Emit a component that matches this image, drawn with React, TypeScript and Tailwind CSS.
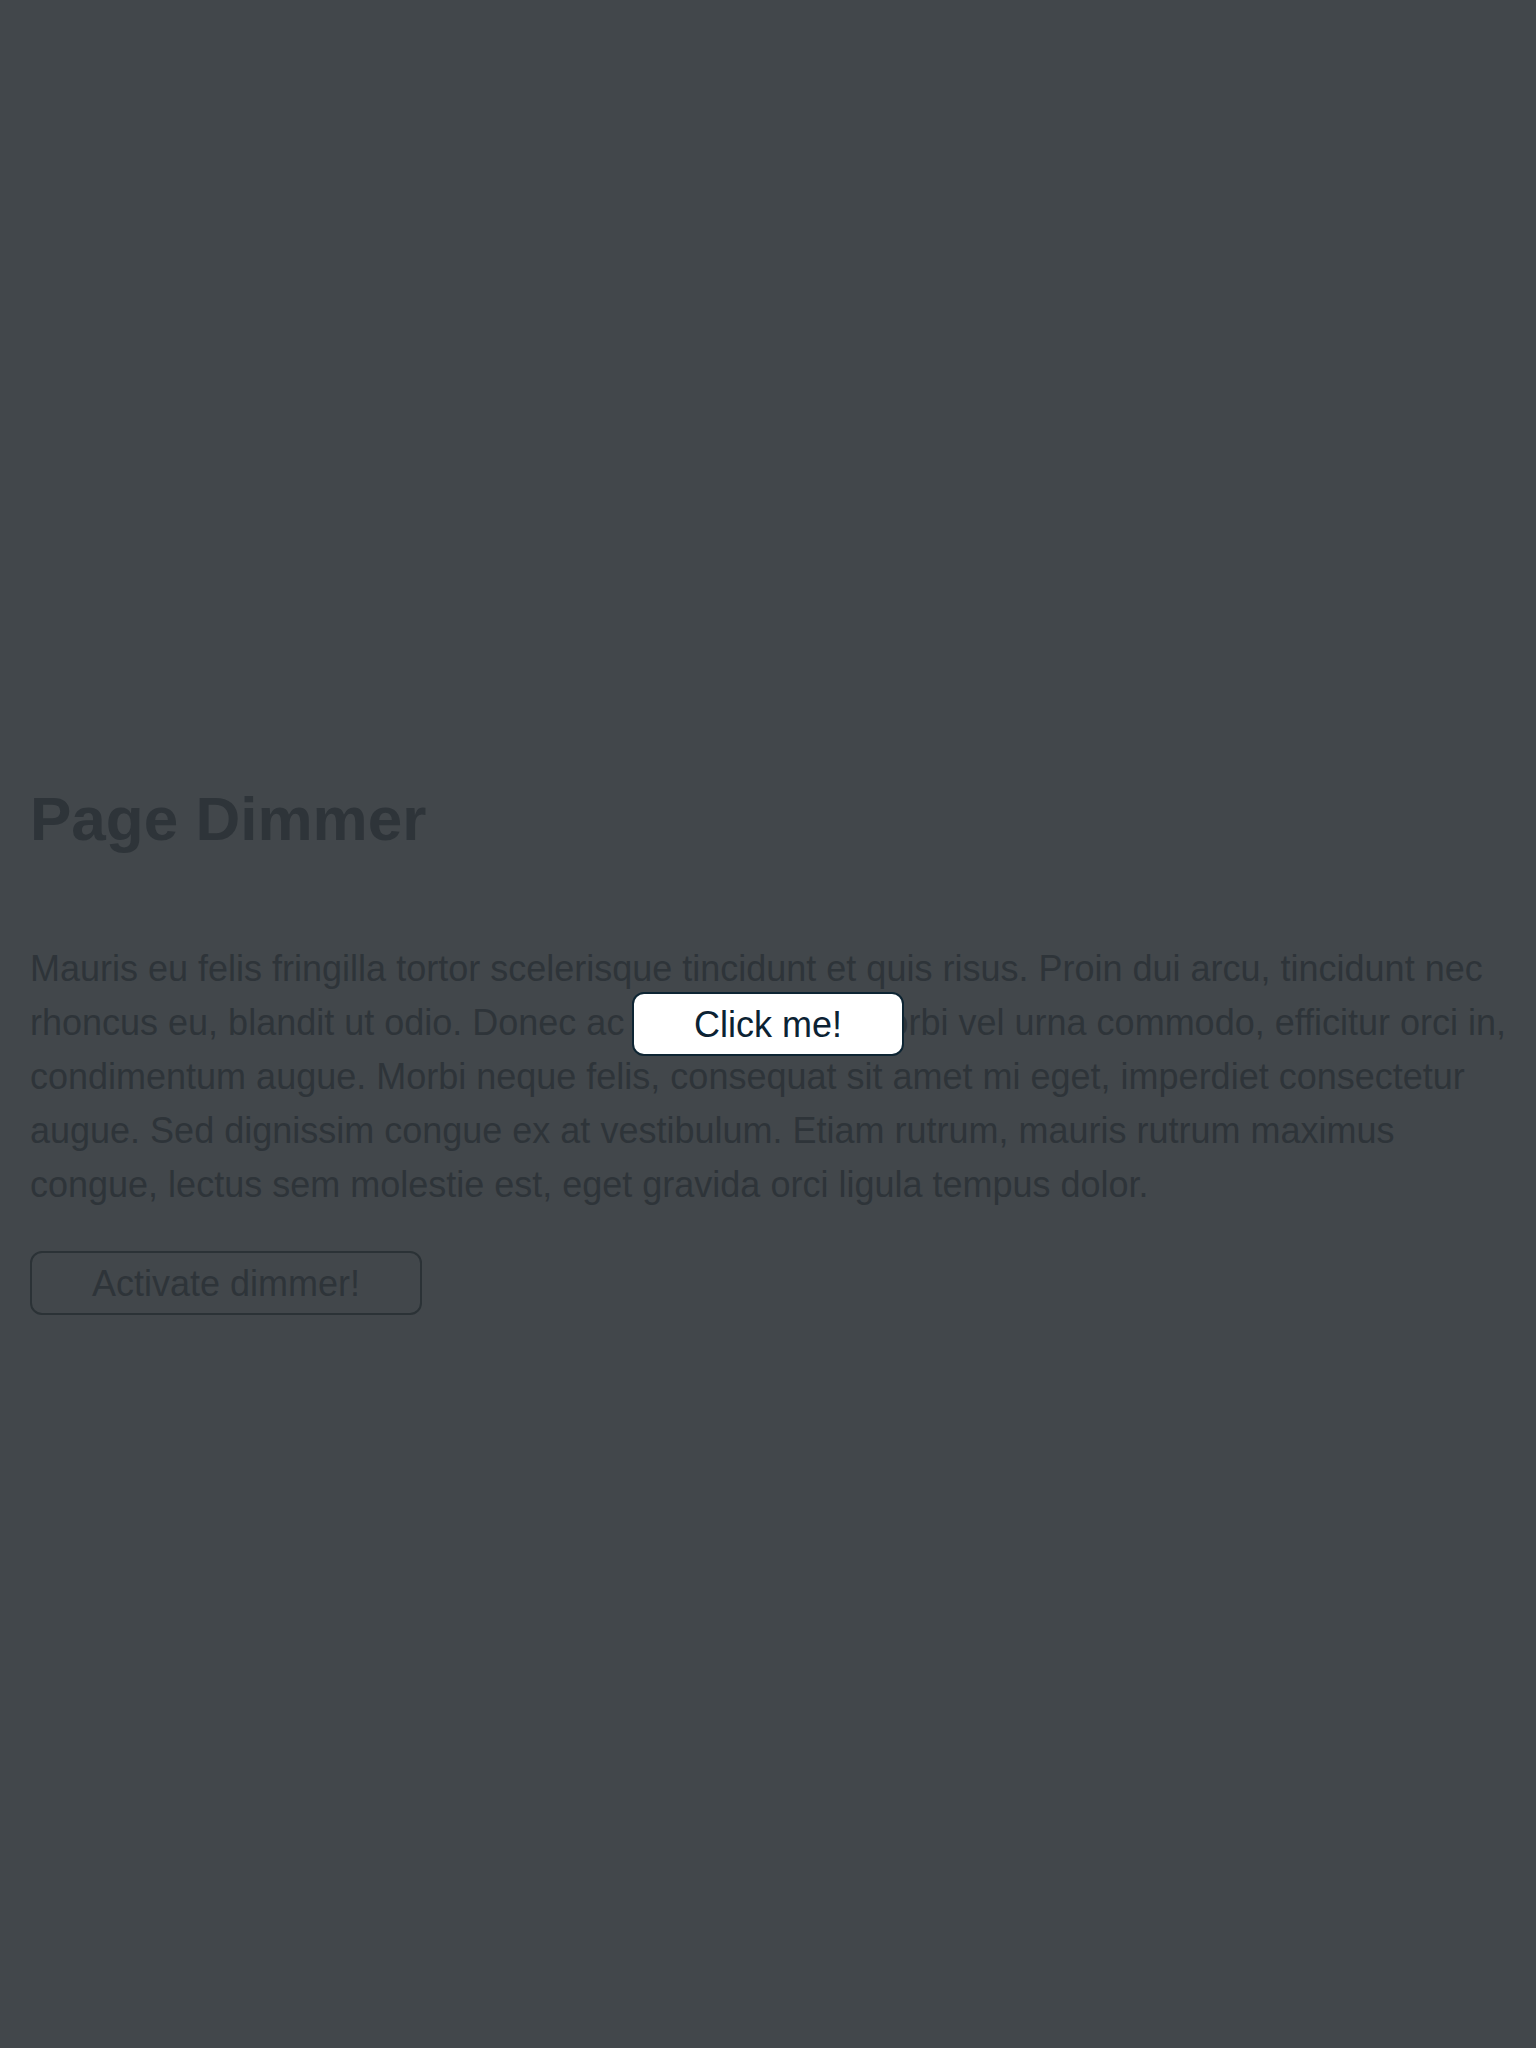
export default function App() {
  return (
    <div className="relative min-h-screen bg-[#42474b] font-['Liberation_Sans',Arial,sans-serif] text-[#2e3439]">
      <div className="pl-[30px] pr-[20px] pt-[784px] pb-[40px]">
        <h1 className="text-[62px] font-bold leading-[70px]">Page Dimmer</h1>
        <p className="mt-[88px] text-[36px] leading-[54px]">
          Mauris eu felis fringilla tortor scelerisque tincidunt et quis risus. Proin dui arcu, tincidunt nec
          rhoncus eu, blandit ut odio. Donec ac pulvinar odio. Morbi vel urna commodo, efficitur orci in,
          condimentum augue. Morbi neque felis, consequat sit amet mi eget, imperdiet consectetur augue. Sed dignissim
          congue ex at vestibulum. Etiam rutrum, mauris rutrum maximus congue, lectus sem molestie est, eget gravida orci
          ligula tempus dolor.
        </p>
        <button className="mt-[39px] flex h-[64px] items-center justify-center rounded-[12px] border-2 border-[#2b3236] px-[60px] text-[36px] leading-[41px] text-[#2e3439]">
          Activate dimmer!
        </button>
      </div>

      {/* dimmer overlay */}
      <div className="fixed inset-0 flex items-center justify-center">
        <button className="flex h-[64px] items-center justify-center rounded-[12px] border-2 border-[#0e2533] bg-white px-[60px] text-[36px] leading-[41px] text-[#0b2233]">
          Click me!
        </button>
      </div>
    </div>
  );
}
